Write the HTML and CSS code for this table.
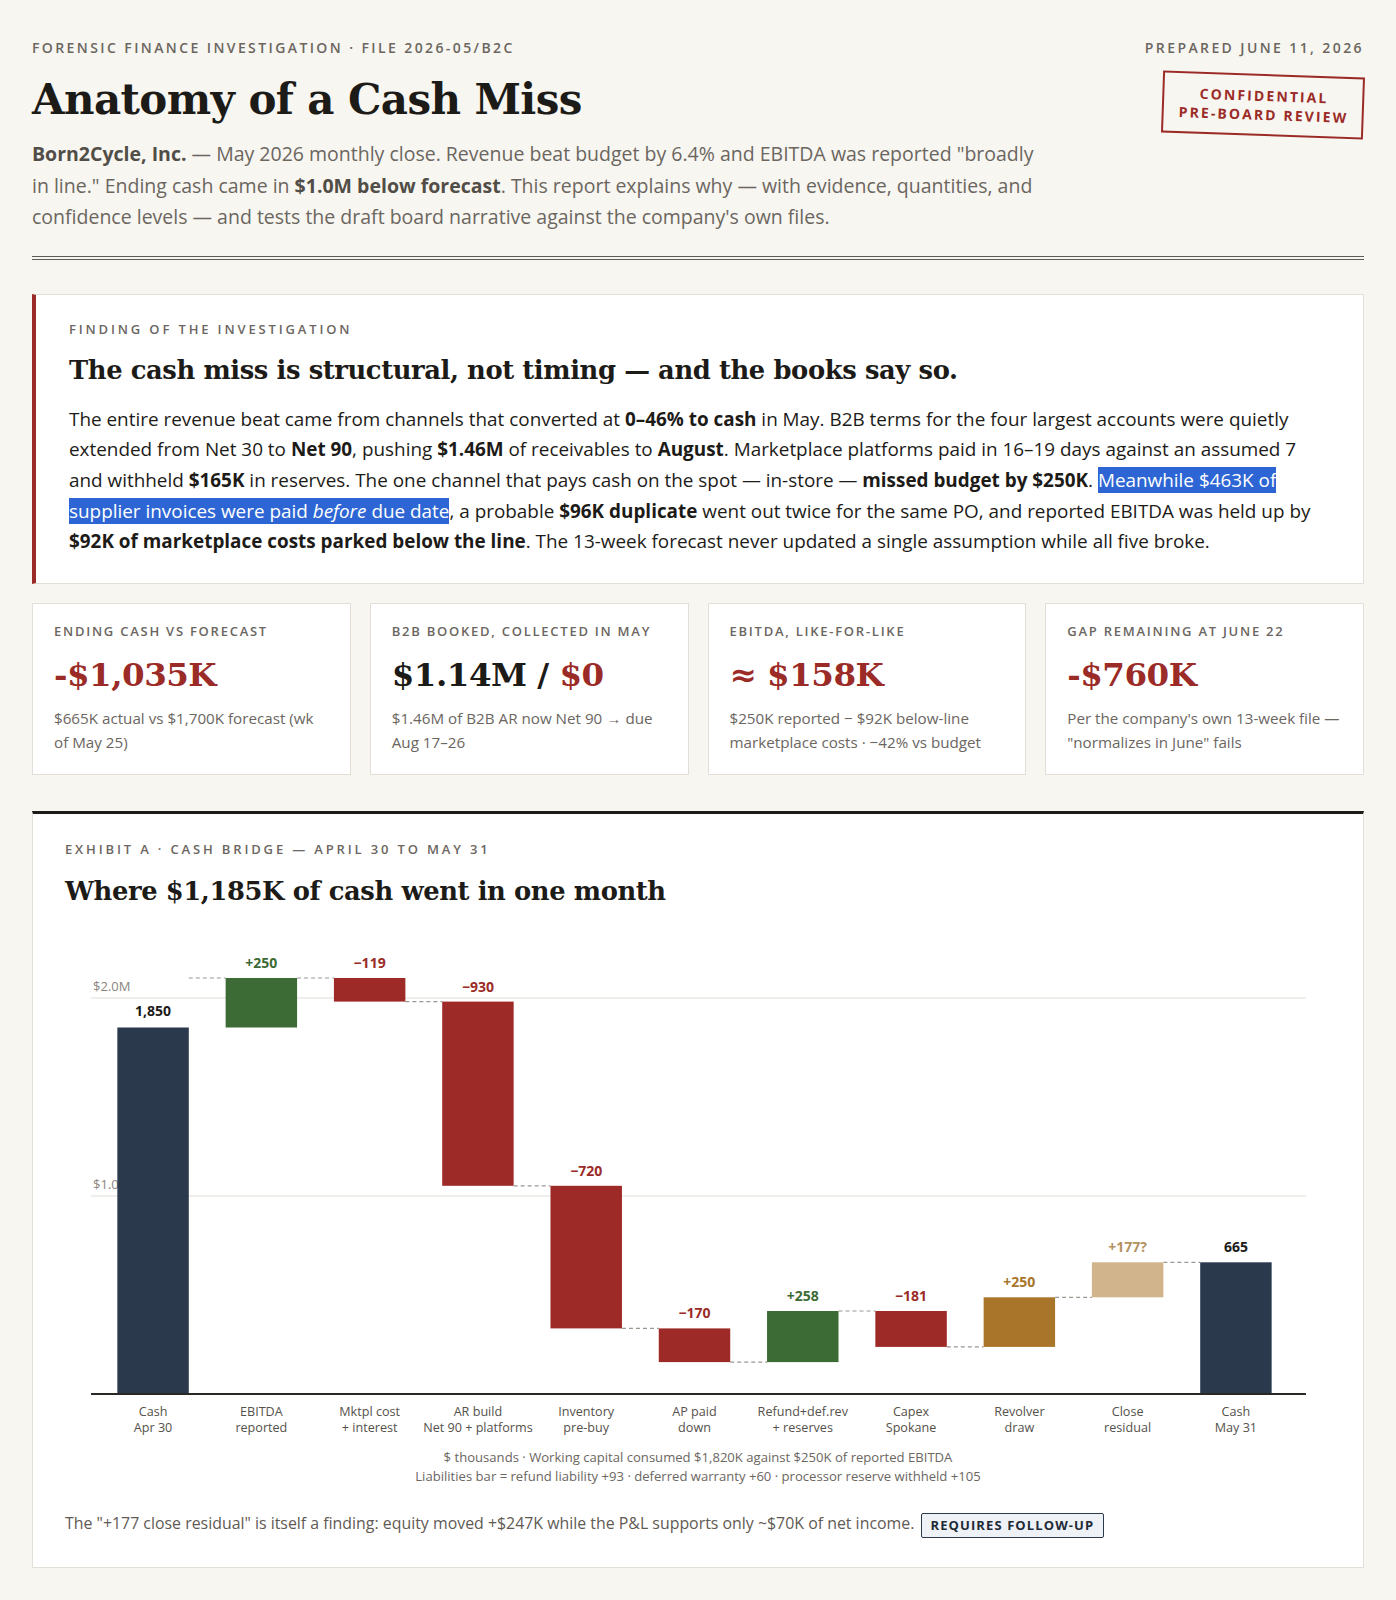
FILE: index.html
```html
<!DOCTYPE html>
<html lang="en">
<head>
<meta charset="utf-8">
<title>Anatomy of a Cash Miss</title>
<link rel="stylesheet" href="styles.css">
</head>
<body>
<div class="page">
  <header class="masthead">
    <div class="mast-main">
      <div class="kicker">Forensic Finance Investigation · File 2026-05/B2C</div>
      <h1 class="title">Anatomy of a Cash Miss</h1>
      <p class="lede"><b>Born2Cycle, Inc.</b> — May 2026 monthly close. Revenue beat budget by 6.4% and EBITDA was reported "broadly in line." Ending cash came in <b>$1.0M below forecast</b>. This report explains why — with evidence, quantities, and confidence levels — and tests the draft board narrative against the company's own files.</p>
    </div>
    <div class="mast-side">
      <div class="kicker">Prepared June 11, 2026</div>
      <div class="stamp">Confidential<br>Pre-Board Review</div>
    </div>
  </header>

  <section class="finding">
    <div class="label finding-label">Finding of the investigation</div>
    <h2 class="finding-title">The cash miss is structural, not timing — and the books say so.</h2>
    <p class="finding-text">The entire revenue beat came from channels that converted at <b>0–46% to cash</b> in May. B2B terms for the four largest accounts were quietly extended from Net 30 to <b>Net 90</b>, pushing <b>$1.46M</b> of receivables to <b>August</b>. Marketplace platforms paid in 16–19 days against an assumed 7 and withheld <b>$165K</b> in reserves. The one channel that pays cash on the spot — in-store — <b>missed budget by $250K</b>. <span class="sel">Meanwhile $463K of supplier invoices were paid <i>before</i> due date</span>, a probable <b>$96K duplicate</b> went out twice for the same PO, and reported EBITDA was held up by <b>$92K of marketplace costs parked below the line</b>. The 13-week forecast never updated a single assumption while all five broke.</p>
  </section>

  <section class="kpis">
    <div class="kpi">
      <div class="label kpi-label">Ending cash vs forecast</div>
      <div class="kpi-num red">-$1,035K</div>
      <div class="kpi-sub">$665K actual vs $1,700K forecast (wk of May 25)</div>
    </div>
    <div class="kpi">
      <div class="label kpi-label">B2B booked, collected in May</div>
      <div class="kpi-num">$1.14M / <span class="red">$0</span></div>
      <div class="kpi-sub">$1.46M of B2B AR now Net 90 → due Aug 17–26</div>
    </div>
    <div class="kpi">
      <div class="label kpi-label">EBITDA, like-for-like</div>
      <div class="kpi-num red">≈ $158K</div>
      <div class="kpi-sub">$250K reported − $92K below-line marketplace costs · −42% vs budget</div>
    </div>
    <div class="kpi">
      <div class="label kpi-label">Gap remaining at June 22</div>
      <div class="kpi-num red">-$760K</div>
      <div class="kpi-sub">Per the company's own 13-week file — "normalizes in June" fails</div>
    </div>
  </section>

  <section class="exhibit">
    <div class="label exhibit-label">Exhibit A · Cash bridge — April 30 to May 31</div>
    <h2 class="exhibit-title">Where $1,185K of cash went in one month</h2>
    <svg class="chart" viewBox="0 0 1265 530" preserveAspectRatio="none">
      <line class="grid" x1="26" y1="89" x2="1240" y2="89"/>
      <line class="grid" x1="26" y1="287" x2="1240" y2="287"/>
      <text class="gridlabel" x="28" y="82">$2.0M</text>
      <text class="gridlabel" x="28" y="280">$1.0M</text>

      <g class="conn">
        <line x1="123.7" y1="69" x2="160.5" y2="69"/>
        <line x1="231.9" y1="69" x2="268.7" y2="69"/>
        <line x1="340.1" y1="92.6" x2="376.9" y2="92.6"/>
        <line x1="448.3" y1="276.8" x2="485.1" y2="276.8"/>
        <line x1="556.5" y1="419.4" x2="593.3" y2="419.4"/>
        <line x1="664.7" y1="453.1" x2="701.5" y2="453.1"/>
        <line x1="772.9" y1="402" x2="809.7" y2="402"/>
        <line x1="881.1" y1="437.9" x2="917.9" y2="437.9"/>
        <line x1="989.3" y1="388.3" x2="1026.1" y2="388.3"/>
        <line x1="1097.5" y1="353.3" x2="1134.3" y2="353.3"/>
      </g>

      <rect class="b-total" x="52.3" y="118.5" width="71.4" height="366.5"/>
      <rect class="b-pos" x="160.5" y="69" width="71.4" height="49.5"/>
      <rect class="b-neg" x="268.7" y="69" width="71.4" height="23.6"/>
      <rect class="b-neg" x="376.9" y="92.6" width="71.4" height="184.2"/>
      <rect class="b-neg" x="485.1" y="276.8" width="71.4" height="142.6"/>
      <rect class="b-neg" x="593.3" y="419.4" width="71.4" height="33.7"/>
      <rect class="b-pos" x="701.5" y="402" width="71.4" height="51.1"/>
      <rect class="b-neg" x="809.7" y="402" width="71.4" height="35.9"/>
      <rect class="b-ochre" x="917.9" y="388.3" width="71.4" height="49.6"/>
      <rect class="b-tan" x="1026.1" y="353.3" width="71.4" height="35"/>
      <rect class="b-total" x="1134.3" y="353.3" width="71.4" height="131.7"/>

      <line class="axis" x1="26" y1="485" x2="1240" y2="485"/>

      <g class="vals">
        <text class="v-total" x="88" y="107">1,850</text>
        <text class="v-pos" x="196.2" y="59">+250</text>
        <text class="v-neg" x="304.4" y="59">−119</text>
        <text class="v-neg" x="412.6" y="83">−930</text>
        <text class="v-neg" x="520.8" y="267">−720</text>
        <text class="v-neg" x="629" y="409">−170</text>
        <text class="v-pos" x="737.2" y="392">+258</text>
        <text class="v-neg" x="845.4" y="392">−181</text>
        <text class="v-ochre" x="953.6" y="378">+250</text>
        <text class="v-tan" x="1061.8" y="343">+177?</text>
        <text class="v-total" x="1170" y="343">665</text>
      </g>

      <g class="cats">
        <text x="88" y="507">Cash</text><text x="88" y="523">Apr 30</text>
        <text x="196.2" y="507">EBITDA</text><text x="196.2" y="523">reported</text>
        <text x="304.4" y="507">Mktpl cost</text><text x="304.4" y="523">+ interest</text>
        <text x="412.6" y="507">AR build</text><text x="412.6" y="523">Net 90 + platforms</text>
        <text x="520.8" y="507">Inventory</text><text x="520.8" y="523">pre-buy</text>
        <text x="629" y="507">AP paid</text><text x="629" y="523">down</text>
        <text x="737.2" y="507">Refund+def.rev</text><text x="737.2" y="523">+ reserves</text>
        <text x="845.4" y="507">Capex</text><text x="845.4" y="523">Spokane</text>
        <text x="953.6" y="507">Revolver</text><text x="953.6" y="523">draw</text>
        <text x="1061.8" y="507">Close</text><text x="1061.8" y="523">residual</text>
        <text x="1170" y="507">Cash</text><text x="1170" y="523">May 31</text>
      </g>
    </svg>
    <div class="chart-foot">
      <div>$ thousands · Working capital consumed $1,820K against $250K of reported EBITDA</div>
      <div>Liabilities bar = refund liability +93 · deferred warranty +60 · processor reserve withheld +105</div>
    </div>
    <p class="note">The "+177 close residual" is itself a finding: equity moved +$247K while the P&amp;L supports only ~$70K of net income. <span class="badge">Requires follow-up</span></p>
  </section>
</div>
</body>
</html>
```

FILE: styles.css
```css
* { box-sizing: border-box; }

body {
  margin: 0;
  background: #f8f6f1;
  font-family: "Open Sans", "Noto Sans", sans-serif;
  color: #1d1b18;
}

.page {
  padding: 39px 32px 34px;
}

/* ---------- masthead ---------- */
.masthead {
  display: flex;
  justify-content: space-between;
  align-items: flex-start;
  padding-bottom: 23px;
  border-bottom: 4px double #5e5a54;
}

.kicker {
  font-size: 14px;
  font-weight: 600;
  letter-spacing: 2.4px;
  line-height: 18px;
  text-transform: uppercase;
  color: #6b665f;
}

.title {
  font-family: "DejaVu Serif", serif;
  font-weight: 700;
  font-size: 42px;
  line-height: 46px;
  letter-spacing: -0.6px;
  margin: 20px 0 15px;
  color: #1d1b18;
}

.lede {
  margin: 0;
  max-width: 1015px;
  font-size: 19.5px;
  line-height: 31.6px;
  color: #6b665f;
}

.lede b {
  color: #514d47;
}

.mast-side {
  display: flex;
  flex-direction: column;
  align-items: flex-end;
}

.stamp {
  margin-top: 17px;
  border: 2px solid #9b2b27;
  color: #9b2b27;
  font-weight: 700;
  font-size: 14px;
  letter-spacing: 2.1px;
  line-height: 19px;
  text-transform: uppercase;
  text-align: center;
  padding: 10px 13px 10px 15px;
  transform: rotate(2deg);
}

/* ---------- shared labels ---------- */
.label {
  text-transform: uppercase;
  font-weight: 600;
  color: #6b665f;
  line-height: 18px;
}

.red { color: #9b2b27; }

/* ---------- finding ---------- */
.finding {
  margin-top: 34px;
  background: #fff;
  border: 1px solid #e3dfd8;
  border-left: 4px solid #9b2b27;
  padding: 25px 38px 26px 33px;
}

.finding-label {
  font-size: 13px;
  letter-spacing: 2.85px;
}

.finding-title {
  font-family: "DejaVu Serif", serif;
  font-weight: 700;
  font-size: 25.8px;
  line-height: 34px;
  letter-spacing: -0.4px;
  margin: 15px 0 17px;
  color: #1d1b18;
}

.finding-text {
  margin: 0;
  font-size: 18.9px;
  line-height: 30.6px;
  color: #1d1b18;
}

.sel {
  background: #2d66d4;
  color: #fff;
}

/* ---------- KPI cards ---------- */
.kpis {
  display: grid;
  grid-template-columns: repeat(4, 1fr);
  gap: 19px;
  margin-top: 19px;
}

.kpi {
  background: #fff;
  border: 1px solid #e3dfd8;
  padding: 18px 19px 19px 21px;
}

.kpi-label {
  font-size: 13px;
  letter-spacing: 1.75px;
}

.kpi-num {
  font-family: "DejaVu Serif", serif;
  font-weight: 700;
  font-size: 32.5px;
  line-height: 40px;
  letter-spacing: -0.5px;
  margin: 15px 0 11px;
  color: #1d1b18;
}

.kpi-num.red { color: #9b2b27; }

.kpi-sub {
  font-size: 15.2px;
  line-height: 24.5px;
  color: #6b665f;
}

/* ---------- exhibit ---------- */
.exhibit {
  margin-top: 36px;
  background: #fff;
  border: 1px solid #e3dfd8;
  border-top: 3px solid #1d1b18;
  padding: 26px 32px 29px;
}

.exhibit-label {
  font-size: 13px;
  letter-spacing: 2.85px;
}

.exhibit-title {
  font-family: "DejaVu Serif", serif;
  font-weight: 700;
  font-size: 25.8px;
  line-height: 35px;
  letter-spacing: -0.4px;
  margin: 16px 0 0;
  color: #1d1b18;
}

.chart {
  display: block;
  width: 100%;
  height: 530px;
}

.chart text {
  font-family: "Open Sans", sans-serif;
}

.grid { stroke: #e2ded7; stroke-width: 1.2; }
.axis { stroke: #2a2825; stroke-width: 2; }
.gridlabel { font-size: 13px; fill: #8a857e; }

.conn line {
  stroke: #9c978f;
  stroke-width: 1.2;
  stroke-dasharray: 4 3;
}

.b-total { fill: #2b394d; }
.b-pos { fill: #3d6b35; }
.b-neg { fill: #9e2a27; }
.b-ochre { fill: #a8752a; }
.b-tan { fill: #d1b48b; }

.vals text {
  font-size: 14px;
  font-weight: 700;
  text-anchor: middle;
}

.v-total { fill: #1d1b18; }
.v-pos { fill: #3d6b35; }
.v-neg { fill: #9b2b27; }
.v-ochre { fill: #a8752a; }
.v-tan { fill: #b3925f; }

.cats text {
  font-size: 12.6px;
  fill: #55514b;
  text-anchor: middle;
}

.chart-foot {
  margin-top: 9.5px;
  text-align: center;
  font-size: 13.1px;
  line-height: 18.5px;
  color: #6b665f;
}

.note {
  margin: 26px 0 0;
  font-size: 15.9px;
  line-height: 24px;
  color: #5f5a54;
}

.badge {
  display: inline-block;
  vertical-align: middle;
  margin-left: 2px;
  padding: 1px 9px;
  border: 1px solid #2b394d;
  border-radius: 2px;
  background: #eef2f7;
  color: #1f2a37;
  font-size: 13px;
  font-weight: 700;
  letter-spacing: 1.1px;
  line-height: 21px;
  text-transform: uppercase;
}
```
